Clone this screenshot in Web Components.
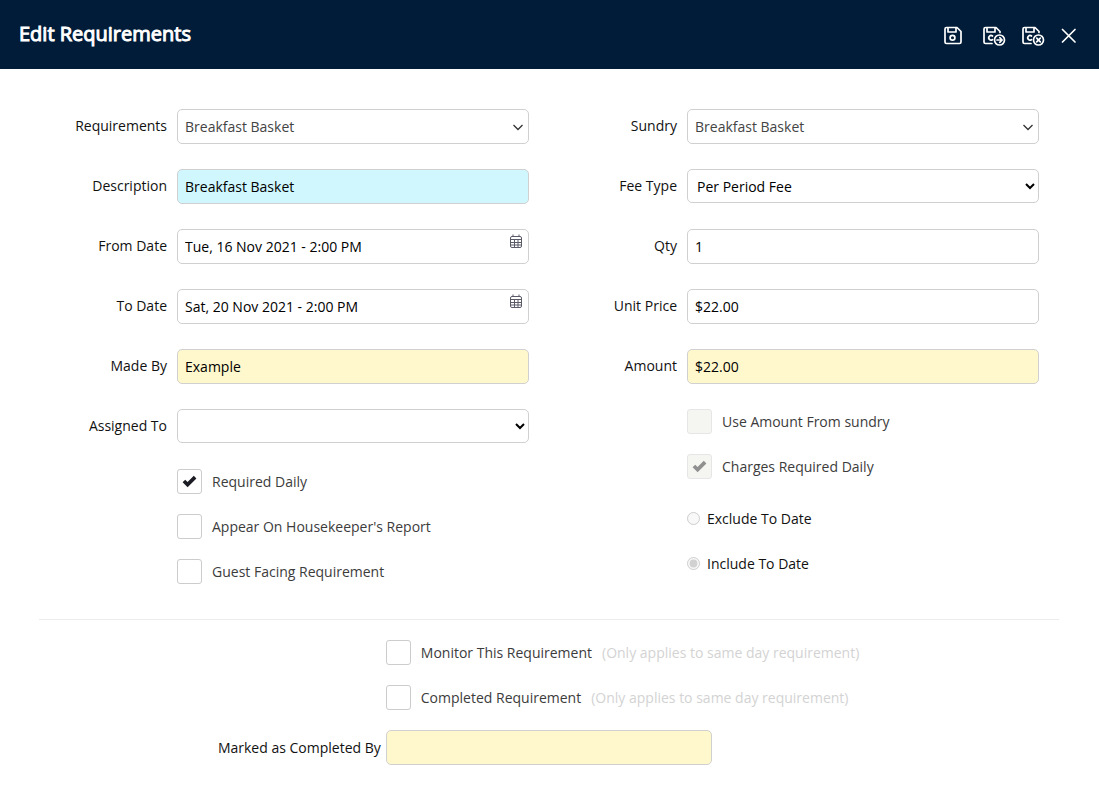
<!DOCTYPE html>
<html lang="en">
<head>
<meta charset="utf-8">
<title>Edit Requirements</title>
<style>
    body {
      margin: 0;
      background: #fff;
      color: #111;
      font: 14px/20px "Open Sans", "Noto Sans", sans-serif;
    }
</style>
</head>
<body>
<requirement-editor></requirement-editor>

<script>
// the two "save and ..." icons share a disk that is cut open for the badge
const CUT_DISK = `<path d="M10 20.5H3.5A1.5 1.5 0 0 1 2 19V6a1.5 1.5 0 0 1 1.5-1.5H14L18 8.5V9.5M5 4.5V9h8V4.5M10.5 13a2.3 2.3 0 1 0 0 3.6"/><circle cx="17.5" cy="17" r="5"/>`;

const ICONS = {
    save: `<path d="M3.5 4.5H14L18 8.5V19a1.5 1.5 0 0 1-1.5 1.5h-13A1.5 1.5 0 0 1 2 19V6a1.5 1.5 0 0 1 1.5-1.5zM5 4.5V9h8V4.5"/><circle cx="9.5" cy="14.8" r="2.4"/>`,
    saveNext: `${CUT_DISK}<path d="M15 17h5M17.8 14.7L20.1 17l-2.3 2.3"/>`,
    saveClose: `${CUT_DISK}<path d="M15.7 15.2l3.6 3.6M19.3 15.2l-3.6 3.6"/>`,
    close: `<path d="M2.5 6.5l12.500 12.500M15 6.500L2.5 19"/>`
};

const FIELD_CSS = `
    * { box-sizing: border-box; }
    label { cursor: default; }
    .box { display: grid; align-items: start; min-width: 0; min-height: 35px; }
    .box > * { grid-area: 1 / 1; }
    input, select {
      width: 100%;
      height: 35px;
      margin: 0;
      padding: 0 7px;
      border: 1px solid #d0d0d0;
      border-radius: 5px;
      background: #fff;
      color: #000;
      font: inherit;
    }
    select { height: 34px; padding: 0 5px; }
    select.plain { height: 35px; appearance: none; padding: 0 7px; color: #444; }
    .blue { background: #cff7fd; }
    .yellow { background: #fff8cd; }
    svg { display: block; fill: none; }
    .chevron { justify-self: end; margin: 15px 5px 0 0; pointer-events: none; }
    button {
      justify-self: end;
      margin: 5px 6px 0 0;
      padding: 0;
      border: 0;
      background: none;
    }
`;

class IconButton extends HTMLElement {
    connectedCallback() {
        this.attachShadow({mode: "open"}).innerHTML = `
<style>
    :host { display: block; color: #fff; }
    button { display: block; padding: 0; border: 0; background: none; color: inherit; cursor: pointer; }
    svg { display: block; fill: none; stroke: currentColor; stroke-width: 1.7; stroke-linecap: round; stroke-linejoin: round; }
</style>
<button type="button" aria-label="${this.getAttribute("label")}">
  <svg width="24" height="24" viewBox="0 0 24 24">${ICONS[this.getAttribute("icon")]}</svg>
</button>`;
    }
}

class FormField extends HTMLElement {
    connectedCallback() {
        this.attachShadow({mode: "open"}).innerHTML = `
<style>
    :host { display: grid; grid-template-columns: 128px minmax(0, 1fr); column-gap: 10px; }
    label { text-align: right; padding-top: 7px; }
    ${FIELD_CSS}
</style>
<label for="control">${this.getAttribute("label")}</label>
<div class="box">${this.control()}</div>`;
    }

    control() {
        const value = this.getAttribute("value") || "";
        const tone = this.getAttribute("tone") || "";
        switch (this.getAttribute("kind")) {
            case "combo":
                return `<select id="control" class="plain"><option>${value}</option></select>
<svg class="chevron" width="12" height="8" viewBox="0 0 12 8" stroke="#333" stroke-width="1.3"><path d="M1.5 1L6 5.500l4.500-4.500"/></svg>`;
            case "select":
                return `<select id="control"><option>${value}</option></select>`;
            case "date":
                return `<input id="control" type="text" value="${value}">
<button type="button" aria-label="Pick a date"><svg width="14" height="15" viewBox="0 0 14 15" stroke="#5a5a68">
  <rect x="1.5" y="2.5" width="11" height="11" rx="1.5"/>
  <path d="M4 0.5v2M10 0.5v2M1.5 5.5h11M1.5 8.5h11M1.5 11h11M5.5 5.5v8M9 5.5v8"/>
</svg></button>`;
            default:
                return `<input id="control" type="text" class="${tone}" value="${value}">`;
        }
    }
}

class CheckField extends HTMLElement {
    connectedCallback() {
        const checked = this.hasAttribute("checked") ? "checked" : "";
        const disabled = this.hasAttribute("disabled") ? "disabled" : "";
        this.attachShadow({mode: "open"}).innerHTML = `
<style>
    :host { display: flex; align-items: center; column-gap: 10px; height: 25px; }
    .box { display: grid; place-items: center; }
    .box > * { grid-area: 1 / 1; }
    input {
      appearance: none;
      box-sizing: border-box;
      width: 25px;
      height: 25px;
      margin: 0;
      border: 1px solid #ccc;
      border-radius: 3px;
      background: #fff;
    }
    input:disabled { background: #f5f5f1; border-color: #e6e6e6; }
    svg { visibility: hidden; pointer-events: none; fill: #1c1c24; }
    input:checked + svg { visibility: visible; }
    input:disabled + svg { fill: #909090; }
    label { color: #3c3c3c; }
    ::slotted(*) { color: #d3d3d3; }
</style>
<span class="box">
  <input id="control" type="checkbox" ${checked} ${disabled}>
  <svg width="15" height="13" viewBox="0 0 15 13"><path d="M0.6 7.2L3.2 4.8L5.6 7L11.8 0.8L14.4 3.4L5.6 12.2z"/></svg>
</span>
<label for="control">${this.getAttribute("label")}</label>
<slot></slot>`;
    }
}

class DateRule extends HTMLElement {
    constructor() {
        super();
        this.attachShadow({mode: "open"}).innerHTML = `
<style>
    :host { display: grid; row-gap: 20px; }
    div { display: flex; align-items: center; column-gap: 7px; height: 25px; }
    input { width: 13px; height: 13px; margin: 0; }
</style>
<div><input type="radio" name="rule" id="exclude" disabled><label for="exclude">Exclude To Date</label></div>
<div><input type="radio" name="rule" id="include" disabled checked><label for="include">Include To Date</label></div>`;
    }
}

class CompletedBy extends HTMLElement {
    constructor() {
        super();
        this.attachShadow({mode: "open"}).innerHTML = `
<style>
    :host { display: grid; grid-template-columns: 34% 32%; }
    label { text-align: right; padding: 8px 5px 0 0; }
    ${FIELD_CSS}
</style>
<label for="control">Marked as Completed By</label>
<div class="box"><input id="control" type="text" class="yellow"></div>`;
    }
}

class RequirementEditor extends HTMLElement {
    constructor() {
        super();
        this.attachShadow({mode: "open"}).innerHTML = `
<style>
    :host { display: block; }
    header {
      display: flex;
      align-items: center;
      justify-content: space-between;
      min-height: 69px;
      padding: 0 15px 0 19px;
      box-sizing: border-box;
      background: #001c38;
    }
    h1 { margin: 0; padding-bottom: 2px; color: #fff; font-size: 20px; line-height: 28px; font-weight: 400; -webkit-text-stroke: 1px #fff; }
    .actions { display: flex; gap: 15px; }
    form { padding: 40px 40px 40px 39px; }
    .columns { display: grid; grid-template-columns: 1fr 1fr; }
    .column { display: flex; flex-direction: column; gap: 25px; padding-right: 20px; }
    .checks { display: grid; gap: 20px; padding-left: 138px; }
    .rule { margin-top: 7px; }
    hr { margin: 35px 0 20px; border: 0; border-top: 1px solid #ececec; }
    .status { display: grid; gap: 20px; }
    .status check-field { margin-left: 34%; }
</style>
<header>
  <h1>Edit Requirements</h1>
  <div class="actions">
    <icon-button icon="save" label="Save"></icon-button>
    <icon-button icon="saveNext" label="Save and continue"></icon-button>
    <icon-button icon="saveClose" label="Save and close"></icon-button>
    <icon-button icon="close" label="Close"></icon-button>
  </div>
</header>
<form>
  <div class="columns">
    <div class="column">
      <form-field kind="combo" label="Requirements" value="Breakfast Basket"></form-field>
      <form-field label="Description" value="Breakfast Basket" tone="blue"></form-field>
      <form-field kind="date" label="From Date" value="Tue, 16 Nov 2021 - 2:00 PM"></form-field>
      <form-field kind="date" label="To Date" value="Sat, 20 Nov 2021 - 2:00 PM"></form-field>
      <form-field label="Made By" value="Example" tone="yellow"></form-field>
      <form-field kind="select" label="Assigned To"></form-field>
      <div class="checks">
        <check-field label="Required Daily" checked></check-field>
        <check-field label="Appear On Housekeeper's Report"></check-field>
        <check-field label="Guest Facing Requirement"></check-field>
      </div>
    </div>
    <div class="column">
      <form-field kind="combo" label="Sundry" value="Breakfast Basket"></form-field>
      <form-field kind="select" label="Fee Type" value="Per Period Fee"></form-field>
      <form-field label="Qty" value="1"></form-field>
      <form-field label="Unit Price" value="$22.00"></form-field>
      <form-field label="Amount" value="$22.00" tone="yellow"></form-field>
      <div class="checks">
        <check-field label="Use Amount From sundry" disabled></check-field>
        <check-field label="Charges Required Daily" checked disabled></check-field>
        <date-rule class="rule"></date-rule>
      </div>
    </div>
  </div>
  <hr>
  <div class="status">
    <check-field label="Monitor This Requirement"><span>(Only applies to same day requirement)</span></check-field>
    <check-field label="Completed Requirement"><span>(Only applies to same day requirement)</span></check-field>
    <completed-by></completed-by>
  </div>
</form>`;
    }
}

customElements.define("icon-button", IconButton);
customElements.define("form-field", FormField);
customElements.define("check-field", CheckField);
customElements.define("date-rule", DateRule);
customElements.define("completed-by", CompletedBy);
customElements.define("requirement-editor", RequirementEditor);
</script>
</body>
</html>
